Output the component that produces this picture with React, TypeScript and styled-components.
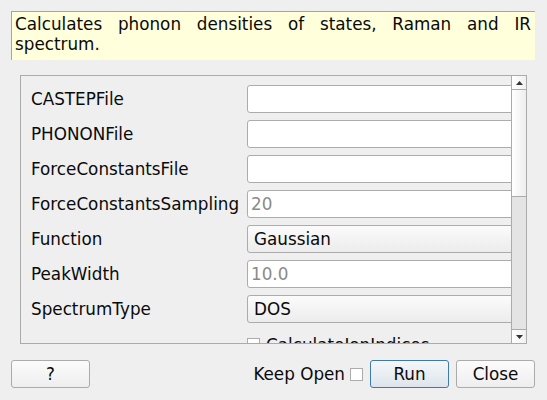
import React from "react";
import styled, { createGlobalStyle } from "styled-components";

const Global = createGlobalStyle`
  html, body { margin: 0; padding: 0; background: #efefef; }
  body {
    font-family: "DejaVu Sans", "Liberation Sans", sans-serif;
    font-size: 16.8px;
    color: #0a0a0a;
  }
  * { box-sizing: border-box; }
`;

const Page = styled.div`
  width: 547px;
  height: 400px;
  padding: 11px 12px 0 11px;
  display: flex;
  flex-direction: column;
  overflow: hidden;
`;

const Description = styled.div`
  background: #ffffdc;
  border-top: 1px solid #a4a4a4;
  border-left: 1px solid #a4a4a4;
  padding: 3px 4px 6px 3px;
  text-align: justify;
  line-height: 19.5px;
`;

const Frame = styled.div`
  margin: 15px 8px 0 9px;
  height: 269px;
  border: 1px solid #ababab;
  display: flex;
  background: #efefef;
`;

const Viewport = styled.div`
  flex: 1;
  overflow: hidden;
  padding: 9px 0 0 10px;
`;

const Form = styled.div`
  display: grid;
  grid-template-columns: 216px 300px;
  row-gap: 7px;
  grid-auto-rows: 28px;
`;

const Label = styled.div`
  align-self: center;
  white-space: nowrap;
`;

const Field = styled.div<{ $combo?: boolean; $placeholder?: boolean }>`
  height: 28px;
  border: 1px solid #acacac;
  border-radius: 3px;
  background: ${(p) => (p.$combo ? "linear-gradient(#fbfbfb, #ececec)" : "#fff")};
  color: ${(p) => (p.$placeholder ? "#8a8a8a" : "#0a0a0a")};
  padding: 0 4px 0 ${(p) => (p.$combo ? "6px" : "3px")};
  display: flex;
  align-items: center;
  white-space: nowrap;
`;

const CheckRow = styled.div`
  grid-column: 2;
  display: flex;
  align-items: center;
  gap: 6px;
  margin-top: 1px;
`;

const Box = styled.span`
  display: inline-block;
  width: 13px;
  height: 13px;
  border: 1px solid #acacac;
  background: #fff;
  flex: none;
`;

const ScrollBar = styled.div`
  width: 15px;
  border-left: 1px solid #ababab;
  display: flex;
  flex-direction: column;
`;

const ArrowBtn = styled.div<{ $down?: boolean }>`
  height: 14px;
  flex: none;
  background: linear-gradient(90deg, #ffffff, #f0f0f0);
  ${(p) => (p.$down ? "border-top: 1px solid #ababab;" : "border-bottom: 1px solid #ababab;")}
  display: flex;
  align-items: center;
  justify-content: center;
`;

const Handle = styled.div`
  height: 107px;
  flex: none;
  background: linear-gradient(90deg, #ffffff, #eeeeee);
  border-bottom: 1px solid #ababab;
`;

const Track = styled.div`
  flex: 1;
  background: #e4e4e4;
`;

const Footer = styled.div`
  margin-top: 16px;
  height: 28px;
  display: flex;
  align-items: center;
`;

const Button = styled.button<{ $primary?: boolean }>`
  font: inherit;
  color: #0a0a0a;
  width: 79px;
  height: 28px;
  padding: 0;
  border-radius: 3px;
  border: 1px solid ${(p) => (p.$primary ? "#3f78ad" : "#ababab")};
  background: ${(p) =>
    p.$primary ? "linear-gradient(#f4f7fa, #dde5ec)" : "linear-gradient(#fbfbfb, #eeeeee)"};
  margin-left: ${(p) => (p.$primary ? "7px" : "0")};
`;

const Spacer = styled.div`
  flex: 1;
`;

const KeepOpen = styled.span`
  margin-right: 5px;
`;

const CloseBtn = styled(Button)`
  margin-left: 7px;
`;

const Tri = ({ down }: { down?: boolean }) => (
  <svg width="7" height="4" viewBox="0 0 7 4">
    <polygon points={down ? "0,0 7,0 3.5,4" : "0,4 7,4 3.5,0"} fill="#333" />
  </svg>
);

type Row = { label: string; value?: string; combo?: boolean; placeholder?: boolean };

const rows: Row[] = [
  { label: "CASTEPFile" },
  { label: "PHONONFile" },
  { label: "ForceConstantsFile" },
  { label: "ForceConstantsSampling", value: "20", placeholder: true },
  { label: "Function", value: "Gaussian", combo: true },
  { label: "PeakWidth", value: "10.0", placeholder: true },
  { label: "SpectrumType", value: "DOS", combo: true },
];

export default function App() {
  return (
    <Page>
      <Global />
      <Description>
        Calculates phonon densities of states, Raman and IR spectrum.
      </Description>
      <Frame>
        <Viewport>
          <Form>
            {rows.map((r) => (
              <React.Fragment key={r.label}>
                <Label>{r.label}</Label>
                <Field $combo={r.combo} $placeholder={r.placeholder}>
                  {r.value ?? ""}
                </Field>
              </React.Fragment>
            ))}
            <CheckRow>
              <Box />
              <span>CalculateIonIndices</span>
            </CheckRow>
          </Form>
        </Viewport>
        <ScrollBar>
          <ArrowBtn>
            <Tri />
          </ArrowBtn>
          <Handle />
          <Track />
          <ArrowBtn $down>
            <Tri down />
          </ArrowBtn>
        </ScrollBar>
      </Frame>
      <Footer>
        <Button>?</Button>
        <Spacer />
        <KeepOpen>Keep Open</KeepOpen>
        <Box />
        <Button $primary>Run</Button>
        <CloseBtn>Close</CloseBtn>
      </Footer>
    </Page>
  );
}
